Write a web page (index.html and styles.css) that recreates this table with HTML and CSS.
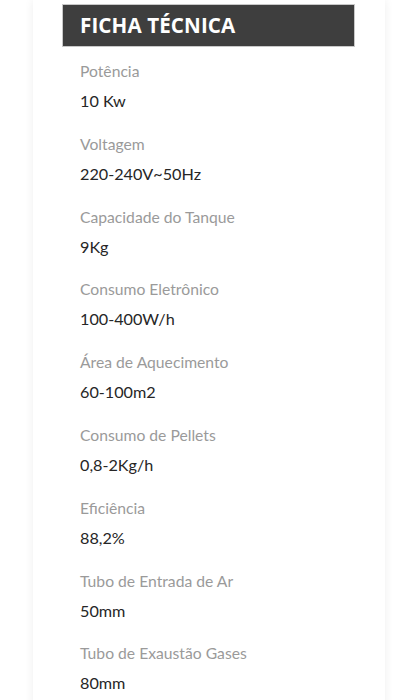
FILE: index.html
```html
<!DOCTYPE html>
<html lang="pt">
<head>
<meta charset="utf-8">
<link rel="stylesheet" href="styles.css">
</head>
<body>
<div class="card">
  <div class="title-bar"><h2 class="title">FICHA TÉCNICA</h2></div>
  <dl class="specs">
    <div class="spec"><dt>Potência</dt><dd>10 Kw</dd></div>
    <div class="spec"><dt>Voltagem</dt><dd>220-240V~50Hz</dd></div>
    <div class="spec"><dt>Capacidade do Tanque</dt><dd>9Kg</dd></div>
    <div class="spec"><dt>Consumo Eletrônico</dt><dd>100-400W/h</dd></div>
    <div class="spec"><dt>Área de Aquecimento</dt><dd>60-100m2</dd></div>
    <div class="spec"><dt>Consumo de Pellets</dt><dd>0,8-2Kg/h</dd></div>
    <div class="spec"><dt>Eficiência</dt><dd>88,2%</dd></div>
    <div class="spec"><dt>Tubo de Entrada de Ar</dt><dd>50mm</dd></div>
    <div class="spec"><dt>Tubo de Exaustão Gases</dt><dd>80mm</dd></div>
  </dl>
</div>
</body>
</html>
```
FILE: styles.css
```css
html, body {
  margin: 0;
  padding: 0;
  background: #ffffff;
}
body {
  font-family: Lato, "Open Sans", sans-serif;
  overflow: hidden;
  height: 700px;
}
.card {
  margin-left: 33px;
  width: 352px;
  min-height: 720px;
  background: #fff;
  box-shadow: 0 0 9px rgba(0, 0, 0, 0.07);
  padding-top: 4px;
  box-sizing: border-box;
}
.title-bar {
  margin-left: 29px;
  width: 293px;
  height: 43px;
  box-sizing: border-box;
  background: #3e3e3e;
  border: 1px solid #c8c8c8;
  display: flex;
  align-items: center;
  padding-left: 17px;
}
.title {
  margin: 0;
  color: #fff;
  font-family: "Open Sans", sans-serif;
  font-weight: 700;
  font-size: 20.6px;
  letter-spacing: 0.1px;
  line-height: 1;
}
.specs {
  margin: 13px 0 0 47px;
  padding: 0;
  display: flex;
  flex-direction: column;
  gap: 20.8px;
}
.spec dt {
  color: #9a9a9a;
  font-size: 15.7px;
  line-height: 22px;
  margin-bottom: 8px;
}
.spec dd {
  margin: 0;
  color: #262626;
  font-size: 16.2px;
  line-height: 22px;
}
```
